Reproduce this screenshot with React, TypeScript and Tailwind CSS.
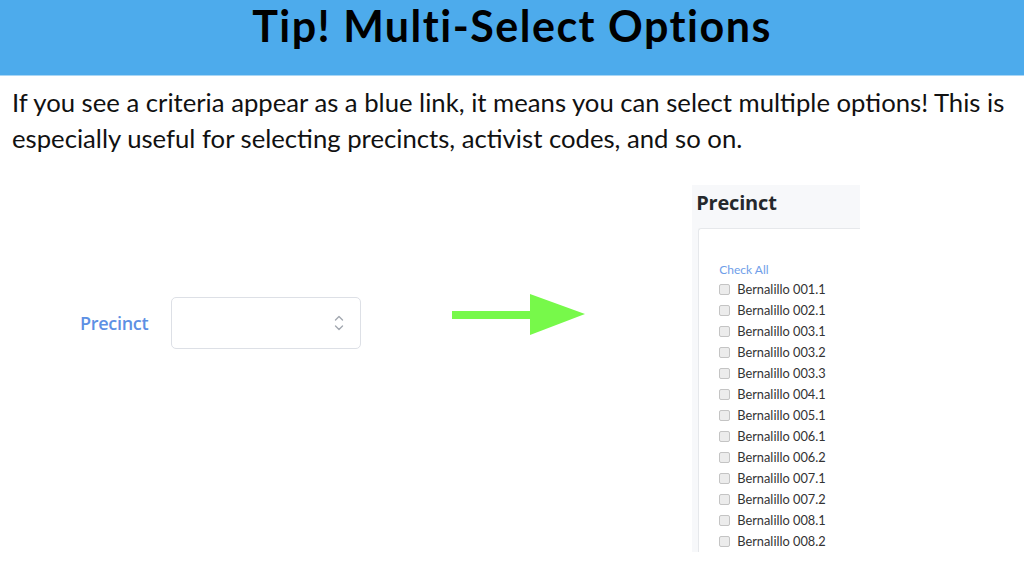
import React from 'react';

const precincts = [
  'Bernalillo 001.1',
  'Bernalillo 002.1',
  'Bernalillo 003.1',
  'Bernalillo 003.2',
  'Bernalillo 003.3',
  'Bernalillo 004.1',
  'Bernalillo 005.1',
  'Bernalillo 006.1',
  'Bernalillo 006.2',
  'Bernalillo 007.1',
  'Bernalillo 007.2',
  'Bernalillo 008.1',
  'Bernalillo 008.2',
];

const SelectChevrons = () => (
  <svg width="10" height="16" viewBox="0 0 10 16" fill="none" stroke="#a3a8b0" strokeWidth="1.4" strokeLinecap="round" strokeLinejoin="round">
    <path d="M1.5 5 5 1.5 8.5 5" />
    <path d="M1.5 11 5 14.5 8.5 11" />
  </svg>
);

const GreenArrow = () => (
  <svg width="134" height="42" viewBox="0 0 134 42">
    <rect x="0" y="17" width="80" height="8" fill="#77f94a" />
    <polygon points="78,0 133,20 78,41" fill="#77f94a" />
  </svg>
);

export default function App() {
  return (
    <div className="w-[1024px] h-[567px] overflow-hidden bg-white font-['Lato','Liberation_Sans',sans-serif]">
      {/* Title bar */}
      <div className="h-[76px] bg-[#4dabec] border-b border-[#a9d6f5] flex justify-center">
        <h1 className="text-[43px] font-bold text-black leading-none pt-[4px] tracking-[1.5px]">
          Tip! Multi-Select Options
        </h1>
      </div>

      <p className="px-3 pt-[8px] text-[25.7px] leading-[36px] text-[#111]">
        If you see a criteria appear as a blue link, it means you can select multiple options! This is especially useful for selecting precincts, activist codes, and so on.
      </p>

      <div className="flex items-start mt-[29px]">
        {/* Before: closed select */}
        <div className="flex items-center ml-[80px] mt-[112px]">
          <span className="text-[18px] font-semibold text-[#5d90e4] font-['Open_Sans','Liberation_Sans',sans-serif] tracking-[-0.3px]">
            Precinct
          </span>
          <div className="ml-[23px] w-[190px] h-[52px] rounded-[5px] border border-[#dde0e6] bg-white flex items-center justify-end pr-[16px]">
            <SelectChevrons />
          </div>
        </div>

        <div className="ml-[91px] mt-[109px]">
          <GreenArrow />
        </div>

        {/* After: expanded multi-select panel */}
        <div className="ml-[106px] w-[168px] h-[367px] bg-[#f7f8fa] overflow-hidden">
          <div className="pl-[4px] pt-[3px] h-[43px] text-[20px] font-bold text-[#25282c] font-['Open_Sans','Liberation_Sans',sans-serif] tracking-[-0.2px]">
            Precinct
          </div>
          <div className="ml-[6px] w-[240px] h-[330px] bg-white border-l border-t border-[#e6e8eb] rounded-tl-[3px] pl-[20px] pt-[32px]">
            <div className="text-[12px] leading-[18px] text-[#6f9ee9]">Check All</div>
            <ul>
              {precincts.map(p => (
                <li key={p} className="flex items-center h-[21px]">
                  <span className="w-[11px] h-[11px] rounded-[2px] border border-[#c4c4c4] bg-[#ececec] ml-[0px] mr-[7px]" />
                  <span className="text-[12.8px] text-[#333] font-['Lato','Liberation_Sans',sans-serif]">{p}</span>
                </li>
              ))}
            </ul>
          </div>
        </div>
      </div>
    </div>
  );
}
